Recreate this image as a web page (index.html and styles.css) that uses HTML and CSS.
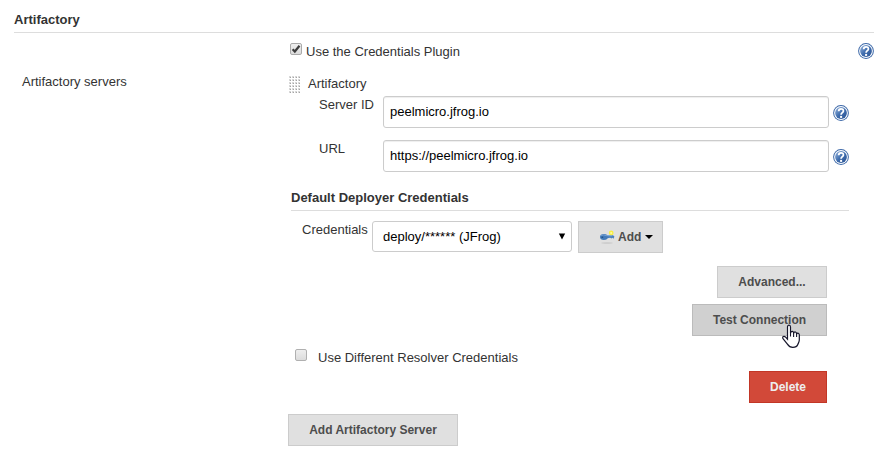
FILE: index.html
```html
<!DOCTYPE html>
<html lang="en">
<head>
<meta charset="utf-8">
<title>Artifactory</title>
<link rel="stylesheet" href="styles.css">
</head>
<body>
<svg class="defs" width="0" height="0" aria-hidden="true">
  <defs>
    <linearGradient id="blue" x1="0" y1="0" x2="1" y2="1">
      <stop offset="0" stop-color="#9ab8df"/><stop offset=".5" stop-color="#3f6dae"/><stop offset="1" stop-color="#2a5292"/>
    </linearGradient>
    <symbol id="help" viewBox="0 0 16 16">
      <circle cx="8" cy="8" r="7.9" fill="#3c68a8"/>
      <circle cx="8" cy="8" r="6.9" fill="#fff"/>
      <circle cx="8" cy="8" r="5.9" fill="url(#blue)"/>
      <path d="M5.7 6.2C5.7 3.1 10.4 3.1 10.4 5.9C10.4 7.7 8.1 7.6 8.1 9.8" fill="none" stroke="#fff" stroke-width="1.8"/>
      <rect x="7.1" y="10.9" width="2" height="2" fill="#fff"/>
    </symbol>
  </defs>
</svg>
<main class="config">
  <h2 class="section-title">Artifactory</h2>
  <div class="row plugin-row">
    <label class="option"><span class="box"><svg width="12" height="12" viewBox="0 0 12 12"><path d="M2.6 6.3L4.8 8.5L9.5 2.7" fill="none" stroke="#3c3c3c" stroke-width="2.2"/></svg></span><span class="option-text">Use the Credentials Plugin</span></label>
    <svg class="help"><use href="#help"/></svg>
  </div>
  <div class="row servers">
    <div class="servers-label">Artifactory servers</div>
    <div class="server">
      <div class="server-name"><svg class="grip" width="12" height="18"><defs><pattern id="dots" width="3" height="3" patternUnits="userSpaceOnUse"><rect width="2" height="2" fill="#d8d8d8"/><rect x="1" y="1" width="1" height="1" fill="#a4a4a4"/></pattern></defs><rect width="12" height="18" fill="url(#dots)"/></svg>Artifactory</div>
      <div class="field"><label for="sid">Server ID</label><input id="sid" type="text" value="peelmicro.jfrog.io"><svg class="help"><use href="#help"/></svg></div>
      <div class="field"><label for="url">URL</label><input id="url" type="text" value="https://peelmicro.jfrog.io"><svg class="help"><use href="#help"/></svg></div>
      <h3 class="subtitle">Default Deployer Credentials</h3>
      <div class="credentials">
        <span class="cred-label">Credentials</span>
        <div class="select"><span>deploy/****** (JFrog)</span><svg width="8" height="7" viewBox="0 0 8 7"><path d="M.8 .5H7.2L4 6.5Z" fill="#000"/></svg></div>
        <button class="btn add"><svg width="17" height="16" viewBox="0 0 17 16">
          <ellipse cx="8" cy="14" rx="6" ry=".7" fill="#c8c8c8"/>
          <path d="M7 6.6L14 6.2L15.4 7.4L14.6 9.8L13.4 8.8L12.4 9.6L11.2 8.8L7 9.4Z" fill="#4b80bd"/>
          <ellipse cx="4.9" cy="8" rx="3.9" ry="3" fill="#437ab9"/>
          <path d="M2.2 6.6Q4.4 5.2 7 6.6L13 6.8" fill="none" stroke="#81a9d8" stroke-width=".8"/>
          <ellipse cx="3.3" cy="8.2" rx="1" ry=".7" fill="#224d80"/>
          <circle cx="12.2" cy="3.9" r="2.4" fill="#f7ee45"/><circle cx="12.2" cy="3.9" r="1" fill="#fffba0"/>
        </svg><span>Add</span><svg width="8" height="4" viewBox="0 0 8 4"><path d="M0 0H8L4 4Z" fill="#000"/></svg></button>
      </div>
      <div class="actions">
        <button class="btn advanced">Advanced...</button>
        <div class="pointed"><button class="btn test">Test Connection</button>
          <svg class="cursor" width="18" height="25" viewBox="0 0 18 25"><path d="M5.5 15.2V3C5.5 .4 8.5 .4 8.5 3V9C9.3 6.6 11.6 7.1 11.6 9.2C12.5 7.2 14.5 7.8 14.6 9.8C15.6 8.4 17.3 9.2 17.3 11V16C17.3 18 16.3 19 15.8 20.5C15 22.8 13.5 23.4 10.8 23.4C8 23.4 6.7 22.2 5.4 20.1L1.2 14.9C-.3 12.7 2 11.5 3.6 13.2Z" fill="#fff" stroke="#15152a" stroke-width="1.2"/><path d="M8.5 8.5V12.5M11.6 9V13M14.6 9.5V13" stroke="#15152a" stroke-width="1.1"/></svg>
        </div>
      </div>
      <label class="option resolver"><span class="box"></span>Use Different Resolver Credentials</label>
      <button class="btn delete">Delete</button>
    </div>
  </div>
  <button class="btn add-server">Add Artifactory Server</button>
</main>
</body>
</html>
```

FILE: styles.css
```css
* { box-sizing: border-box; }
body { margin: 0; background: #fff; color: #333; font: 13px/16px "Liberation Sans", Arial, sans-serif; }
.defs { position: absolute; }
.config { width: 881px; height: 453px; padding: 12px 7px 0 14px; overflow: hidden; }
.section-title, .subtitle { margin: 0; font-size: 13px; line-height: 16px; font-weight: bold; border-bottom: 1px solid #ddd; }
.section-title { height: 21px; }
.help { display: block; flex: none; width: 16px; height: 16px; }
.plugin-row { display: flex; justify-content: space-between; height: 41px; padding: 10px 0 0 276px; }
.option { display: flex; align-items: flex-start; gap: 4px; height: 16px; }
.option-text { padding-top: 1px; }
.box { display: block; flex: none; width: 12px; height: 12px; border: 1px solid #aaa; border-radius: 2px; background: linear-gradient(#eee, #dcdcdc); }
.box svg { display: block; margin: -1px; }
.servers { display: grid; grid-template-columns: 274px 561px; }
.servers-label { padding-left: 8px; }
.server { display: flex; flex-direction: column; padding: 2px 0 0 1px; }
.server-name { display: flex; gap: 7px; height: 20px; }
.grip { flex: none; }
.field { display: grid; grid-template-columns: 64px 446px 16px; height: 44px; padding-left: 30px; }
.field label { padding-top: 1px; }
.field .help { margin: 9px 0 0 4px; }
.field input { width: 446px; height: 32px; padding: 0 6px 2px; border: 1px solid #ccc; border-radius: 3px; box-shadow: inset 0 1px 1px #eee; color: #000; background: #fff; font: 13px "Liberation Sans", Arial, sans-serif; }
.subtitle { width: 558px; height: 21px; margin: 6px 0 10px 2px; }
.credentials { display: flex; height: 32px; padding-left: 13px; }
.cred-label { width: 70px; padding-top: 1px; }
.select { display: flex; align-items: center; justify-content: space-between; width: 200px; height: 31px; padding: 0 5px 0 10px; border: 1px solid #ccc; border-radius: 3px; color: #000; }
.btn { display: block; height: 32px; margin: 0; padding: 0; border: 1px solid #ccc; border-radius: 0; background: #e0e0e0; color: #4d4d4d; font: bold 12px/16px "Liberation Sans", Arial, sans-serif; text-align: center; }
.add { display: flex; align-items: center; width: 85px; margin-left: 6px; padding-left: 20px; }
.add span { margin: 0 4px 0 2px; }
.actions { display: flex; flex-direction: column; align-items: flex-end; gap: 6px; width: 538px; margin-top: 13px; }
.advanced { width: 110px; }
.pointed { position: relative; }
.test { width: 135px; background: #d0d0d0; border-color: #bbb; }
.cursor { position: absolute; left: 90px; top: 20px; }
.resolver { gap: 11px; height: 22px; margin: 13px 0 0 6px; line-height: 18px; }
.resolver .box { border-color: #b0b0b0; }
.delete { width: 78px; margin-left: 460px; background: #d24939; border-color: #c23626; color: #eee; }
.add-server { width: 170px; margin: 11px 0 0 274px; }
```
